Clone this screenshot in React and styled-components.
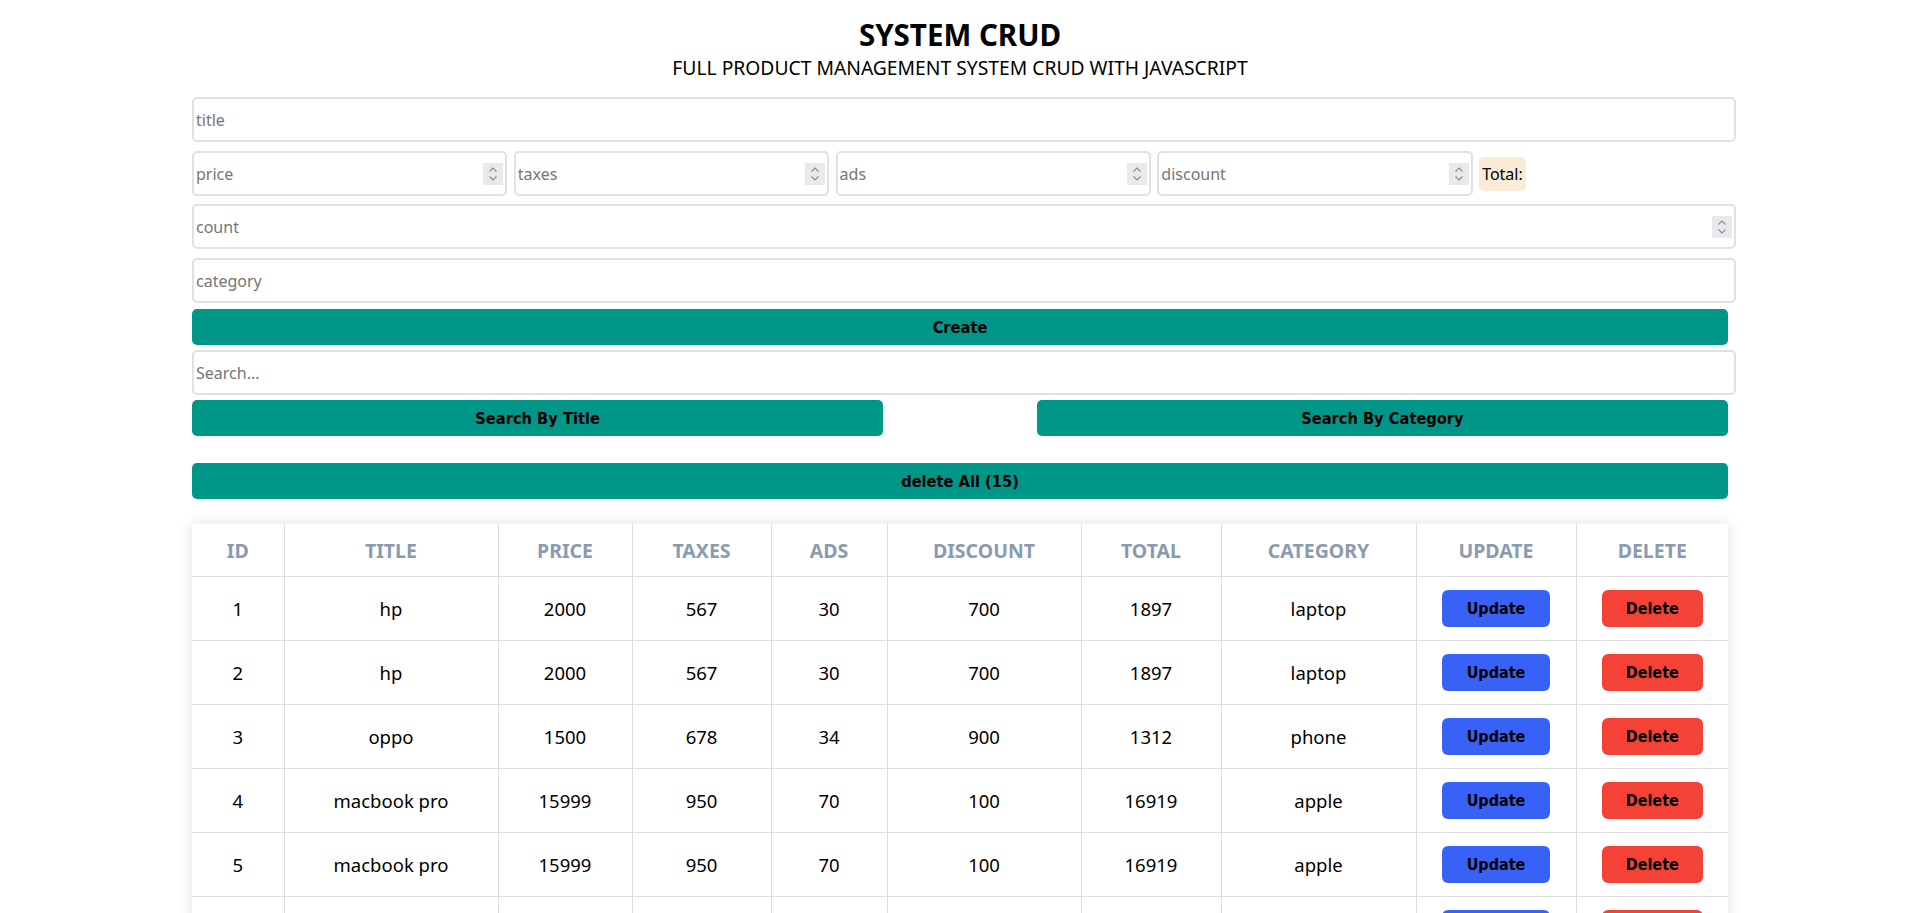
import React from 'react';
import styled, { createGlobalStyle } from 'styled-components';

const GlobalStyle = createGlobalStyle`
  body {
    margin: 0;
    background: #fff;
    color: #000;
    font-family: "Noto Sans", "Open Sans", sans-serif;
  }
`;

const products = [
  ['hp', 2000, 567, 30, 700, 'laptop'],
  ['hp', 2000, 567, 30, 700, 'laptop'],
  ['oppo', 1500, 678, 34, 900, 'phone'],
  ['macbook pro', 15999, 950, 70, 100, 'apple'],
  ['macbook pro', 15999, 950, 70, 100, 'apple'],
  ['macbook pro', 15999, 950, 70, 100, 'apple'],
  ['iphone', 1200, 100, 20, 50, 'phone'],
  ['iphone', 1200, 100, 20, 50, 'phone'],
  ['dell', 1800, 300, 25, 200, 'laptop'],
  ['dell', 1800, 300, 25, 200, 'laptop'],
  ['samsung', 900, 120, 10, 60, 'phone'],
  ['samsung', 900, 120, 10, 60, 'phone'],
  ['lenovo', 1100, 150, 15, 100, 'laptop'],
  ['ipad', 800, 90, 10, 40, 'apple'],
  ['ipad', 800, 90, 10, 40, 'apple'],
];

const columns = [
  ['id', 92], ['title', 214], ['price', 134], ['taxes', 139], ['ads', 116],
  ['discount', 194], ['total', 140], ['category', 195], ['update', 160], ['delete', 152],
];

const Page = styled.div`
  width: 80%;
  margin: 0 auto;
  padding-bottom: 40px;
`;

const Head = styled.header`
  text-align: center;
  padding-top: 17px;
  margin-bottom: 16px;
`;

const Title = styled.h2`
  margin: 0;
  font-size: 29.5px;
  line-height: 36px;
  font-weight: 700;
`;

const Subtitle = styled.p`
  margin: 2px 0 0;
  font-size: 19.3px;
  line-height: 26px;
`;

const Box = styled.div`
  position: relative;
  width: ${(p) => p.$w || 'calc(100% + 8px)'};
  margin-bottom: ${(p) => p.$mb ?? 9}px;
  flex: none;
`;

const Field = styled.input`
  display: block;
  box-sizing: border-box;
  width: 100%;
  height: 45px;
  padding: 0 2px;
  border: 2px solid #e1e1e1;
  border-radius: 5px;
  font: 16px "Noto Sans", sans-serif;
  color: #000;
  outline: none;
  -moz-appearance: textfield;

  &::placeholder {
    color: #767676;
  }

  &::-webkit-inner-spin-button,
  &::-webkit-outer-spin-button {
    -webkit-appearance: none;
    margin: 0;
  }
`;

const Spin = styled.span`
  position: absolute;
  right: 4px;
  top: 50%;
  transform: translateY(-50%);
  width: 20px;
  height: 22px;
  background: #e9e9ed;
  display: flex;
  align-items: center;
  justify-content: center;
  pointer-events: none;
`;

const PriceRow = styled.div`
  display: flex;
  align-items: center;
  gap: 6.6px;
  margin-bottom: 8px;
`;

const TotalTag = styled.small`
  font-size: 16px;
  line-height: 24px;
  padding: 5px 3px;
  background: antiquewhite;
  border-radius: 5px;
`;

const Action = styled.button`
  display: block;
  width: ${(p) => p.$w || '100%'};
  height: 36px;
  margin-bottom: ${(p) => p.$mb ?? 0}px;
  padding: 0;
  border: none;
  border-radius: 5px;
  background: #009688;
  color: #000;
  font: bold 16.3px "DejaVu Sans Condensed", Tahoma, sans-serif;
  cursor: pointer;
`;

const SearchRow = styled.div`
  display: flex;
  justify-content: space-between;
  margin-bottom: 27px;
`;

const Table = styled.table`
  width: 100%;
  border-collapse: collapse;
  table-layout: fixed;
  background: #fff;
  box-shadow: 0 0 14px rgba(0, 0, 0, 0.12);
  text-align: center;
  margin-top: 25px;
`;

const Th = styled.th`
  height: 52px;
  padding: 0;
  font-size: 19.5px;
  font-weight: 700;
  color: #8a9ab0;
  text-transform: uppercase;
  border-bottom: 1px solid #ddd;

  & + & {
    border-left: 1px solid #ddd;
  }
`;

const Td = styled.td`
  height: 63px;
  padding: 0;
  font-size: 18.5px;
  border-bottom: 1px solid #ddd;

  & + & {
    border-left: 1px solid #ddd;
  }
`;

const RowButton = styled.button`
  height: 37px;
  padding: 0 ${(p) => p.$pad}px;
  border: none;
  border-radius: 6px;
  background: ${(p) => p.$bg};
  color: #000;
  font: bold 16px "DejaVu Sans Condensed", Tahoma, sans-serif;
  cursor: pointer;
`;

const Chevrons = () => (
  <svg width="10" height="16" viewBox="0 0 10 16" fill="none" stroke="#8a8a8a" strokeWidth="1.1">
    <path d="M1.5 5.5 L5 2 L8.5 5.5" />
    <path d="M1.5 10.5 L5 14 L8.5 10.5" />
  </svg>
);

const NumberField = ({ placeholder, w, mb }) => (
  <Box $w={w} $mb={mb}>
    <Field type="number" placeholder={placeholder} />
    <Spin><Chevrons /></Spin>
  </Box>
);

export default function App() {
  return (
    <Page>
      <GlobalStyle />
      <Head>
        <Title>SYSTEM CRUD</Title>
        <Subtitle>FULL PRODUCT MANAGEMENT SYSTEM CRUD WITH JAVASCRIPT</Subtitle>
      </Head>

      <Box $mb={9}>
        <Field type="text" placeholder="title" />
      </Box>
      <PriceRow>
        {['price', 'taxes', 'ads', 'discount'].map((p) => (
          <NumberField key={p} placeholder={p} w="calc(20% + 8px)" mb={0} />
        ))}
        <TotalTag>Total:</TotalTag>
      </PriceRow>
      <NumberField placeholder="count" mb={9} />
      <Box $mb={6}>
        <Field type="text" placeholder="category" />
      </Box>
      <Action $mb={5}>Create</Action>
      <Box $mb={5}>
        <Field type="text" placeholder="Search..." />
      </Box>
      <SearchRow>
        <Action $w="45%">Search By Title</Action>
        <Action $w="45%">Search By Category</Action>
      </SearchRow>
      <Action>delete All ({products.length})</Action>

      <Table>
        <colgroup>
          {columns.map(([k, w]) => (
            <col key={k} style={{ width: w }} />
          ))}
        </colgroup>
        <thead>
          <tr>
            {columns.map(([k]) => (
              <Th key={k}>{k}</Th>
            ))}
          </tr>
        </thead>
        <tbody>
          {products.map(([title, price, taxes, ads, discount, category], i) => (
            <tr key={i}>
              <Td>{i + 1}</Td>
              <Td>{title}</Td>
              <Td>{price}</Td>
              <Td>{taxes}</Td>
              <Td>{ads}</Td>
              <Td>{discount}</Td>
              <Td>{price + taxes + ads - discount}</Td>
              <Td>{category}</Td>
              <Td>
                <RowButton $bg="#3861f6" $pad={25}>Update</RowButton>
              </Td>
              <Td>
                <RowButton $bg="#f44336" $pad={24}>Delete</RowButton>
              </Td>
            </tr>
          ))}
        </tbody>
      </Table>
    </Page>
  );
}
